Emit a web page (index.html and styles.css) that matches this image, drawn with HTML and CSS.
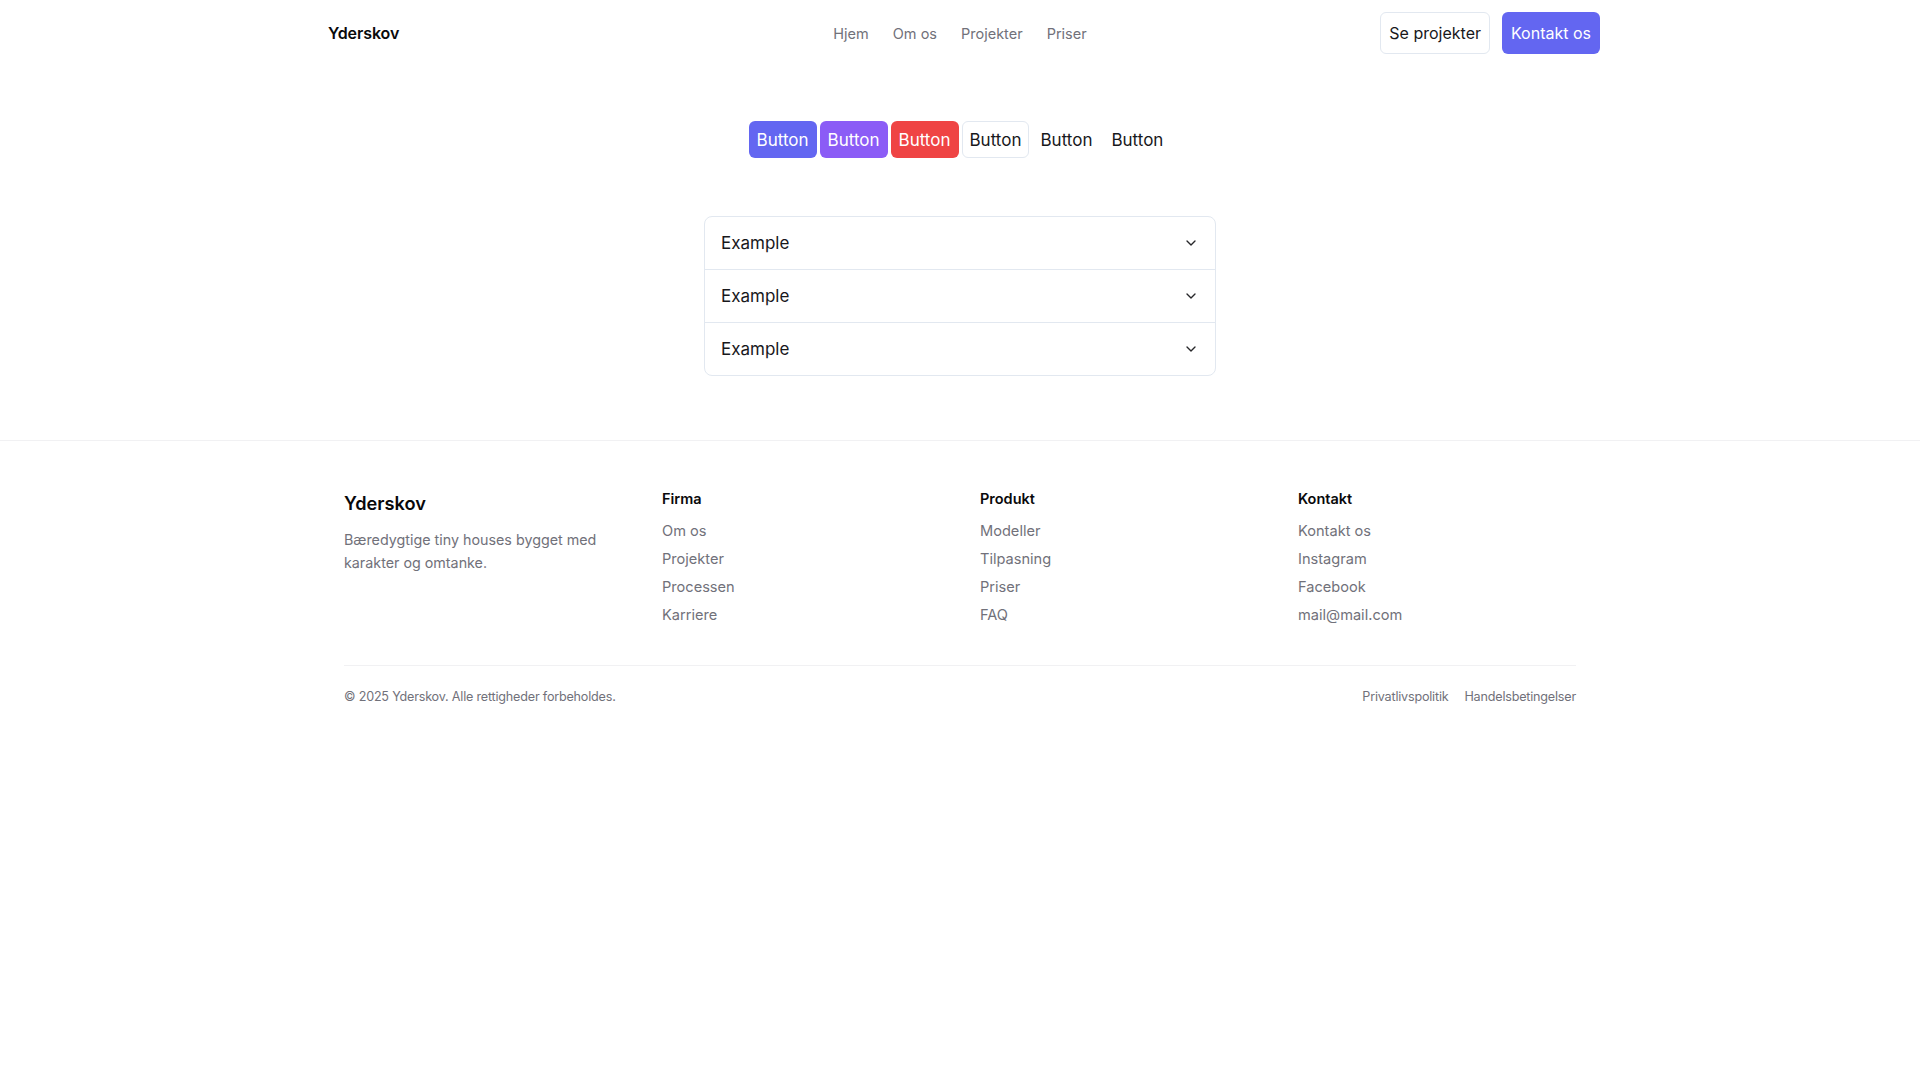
FILE: index.html
```html
<!DOCTYPE html>
<html lang="da">
<head>
<meta charset="utf-8">
<title>Yderskov</title>
<link rel="stylesheet" href="styles.css">
</head>
<body>
<header class="site-header">
  <div class="container header-inner">
    <a class="logo" href="#">Yderskov</a>
    <nav class="main-nav">
      <a href="#">Hjem</a>
      <a href="#">Om os</a>
      <a href="#">Projekter</a>
      <a href="#">Priser</a>
    </nav>
    <div class="header-actions">
      <a class="hbtn hbtn-outline" href="#">Se projekter</a>
      <a class="hbtn hbtn-primary" href="#">Kontakt os</a>
    </div>
  </div>
</header>

<main class="main">
  <div class="button-row">
    <button class="btn btn-indigo">Button</button>
    <button class="btn btn-violet">Button</button>
    <button class="btn btn-red">Button</button>
    <button class="btn btn-outline">Button</button>
    <button class="btn btn-ghost">Button</button>
    <button class="btn btn-ghost">Button</button>
  </div>

  <div class="accordion">
    <div class="acc-item">
      <span>Example</span>
      <svg class="chev" viewBox="0 0 24 24" width="16" height="16" fill="none" stroke="currentColor" stroke-width="2" stroke-linecap="round" stroke-linejoin="round"><path d="m6 9 6 6 6-6"/></svg>
    </div>
    <div class="acc-item">
      <span>Example</span>
      <svg class="chev" viewBox="0 0 24 24" width="16" height="16" fill="none" stroke="currentColor" stroke-width="2" stroke-linecap="round" stroke-linejoin="round"><path d="m6 9 6 6 6-6"/></svg>
    </div>
    <div class="acc-item">
      <span>Example</span>
      <svg class="chev" viewBox="0 0 24 24" width="16" height="16" fill="none" stroke="currentColor" stroke-width="2" stroke-linecap="round" stroke-linejoin="round"><path d="m6 9 6 6 6-6"/></svg>
    </div>
  </div>
</main>

<footer class="site-footer">
  <div class="footer-inner">
    <div class="footer-grid">
      <div class="brand-col">
        <div class="footer-logo">Yderskov</div>
        <p class="footer-desc">Bæredygtige tiny houses bygget med karakter og omtanke.</p>
      </div>
      <div class="fcol">
        <h4>Firma</h4>
        <a href="#">Om os</a>
        <a href="#">Projekter</a>
        <a href="#">Processen</a>
        <a href="#">Karriere</a>
      </div>
      <div class="fcol">
        <h4>Produkt</h4>
        <a href="#">Modeller</a>
        <a href="#">Tilpasning</a>
        <a href="#">Priser</a>
        <a href="#">FAQ</a>
      </div>
      <div class="fcol">
        <h4>Kontakt</h4>
        <a href="#">Kontakt os</a>
        <a href="#">Instagram</a>
        <a href="#">Facebook</a>
        <a href="#">mail@mail.com</a>
      </div>
    </div>
    <div class="footer-bottom">
      <span>© 2025 Yderskov. Alle rettigheder forbeholdes.</span>
      <div class="legal">
        <a href="#">Privatlivspolitik</a>
        <a href="#">Handelsbetingelser</a>
      </div>
    </div>
  </div>
</footer>
</body>
</html>
```

FILE: styles.css
```css
* { box-sizing: border-box; }

html, body {
  margin: 0;
  padding: 0;
  background: #ffffff;
  color: #18181b;
  font-family: Inter, "Noto Sans", "Liberation Sans", sans-serif;
}

a { text-decoration: none; color: inherit; }

.container {
  max-width: 1280px;
  margin: 0 auto;
}

/* Header */
.site-header {
  padding: 12px 0;
}

.header-inner {
  display: grid;
  grid-template-columns: 1fr auto 1fr;
  align-items: center;
  height: 42px;
}

.logo {
  padding-left: 8px;
  font-size: 16px;
  font-weight: 600;
  color: #09090b;
  letter-spacing: -0.1px;
}

.main-nav {
  display: flex;
  gap: 24px;
  font-size: 14.5px;
  color: #71717a;
}

.header-actions {
  display: flex;
  justify-content: flex-end;
  gap: 12px;
}

.hbtn {
  display: inline-flex;
  align-items: center;
  height: 42px;
  padding: 0 8px;
  border-radius: 6px;
  font-size: 16px;
  border: 1px solid transparent;
}

.hbtn-outline {
  border-color: #e2e8f0;
  color: #18181b;
  background: #fff;
}

.hbtn-primary {
  background: #6366f1;
  color: #fff;
}

/* Main */
.main {
  padding: 55px 0 64px;
}

.button-row {
  display: flex;
  justify-content: center;
  gap: 3px;
}

.btn {
  height: 37px;
  padding: 0 7px;
  border: 1px solid transparent;
  border-radius: 6px;
  font-family: inherit;
  font-size: 17px;
  background: transparent;
  color: #18181b;
  cursor: pointer;
}

.btn-indigo { background: #6366f1; color: #fff; }
.btn-violet { background: #8b5cf6; color: #fff; }
.btn-red { background: #ef4444; color: #fff; }
.btn-outline { background: #fff; border-color: #e2e8f0; }

.accordion {
  width: 512px;
  margin: 58px auto 0;
  border: 1px solid #e2e8f0;
  border-radius: 8px;
}

.acc-item {
  display: flex;
  align-items: center;
  justify-content: space-between;
  padding: 16px;
  line-height: 20px;
  font-size: 17px;
  color: #18181b;
}

.acc-item + .acc-item {
  border-top: 1px solid #e2e8f0;
}

.chev { color: #27272a; flex: none; }

/* Footer */
.site-footer {
  border-top: 1px solid #f1f1f3;
}

.footer-inner {
  max-width: 1280px;
  margin: 0 auto;
  padding: 48px 24px 32px;
}

.footer-grid {
  display: grid;
  grid-template-columns: repeat(4, 1fr);
  gap: 40px;
  padding-bottom: 40px;
  border-bottom: 1px solid #f1f1f3;
}

.footer-logo {
  font-size: 18.2px;
  font-weight: 600;
  line-height: 28px;
  color: #09090b;
}

.footer-desc {
  margin: 11px 0 0;
  font-size: 14.3px;
  line-height: 23px;
  color: #71717a;
}

.fcol {
  display: flex;
  flex-direction: column;
  gap: 8px;
  font-size: 14.6px;
  line-height: 20px;
}

.fcol h4 {
  margin: 0 0 4px;
  font-size: 14.5px;
  font-weight: 600;
  line-height: 20px;
  color: #09090b;
}

.fcol a { color: #71717a; }

.footer-bottom {
  display: flex;
  justify-content: space-between;
  align-items: center;
  padding-top: 21px;
  font-size: 12.6px;
  line-height: 20px;
  color: #71717a;
  letter-spacing: -0.2px;
}

.legal {
  display: flex;
  gap: 16px;
}
```
